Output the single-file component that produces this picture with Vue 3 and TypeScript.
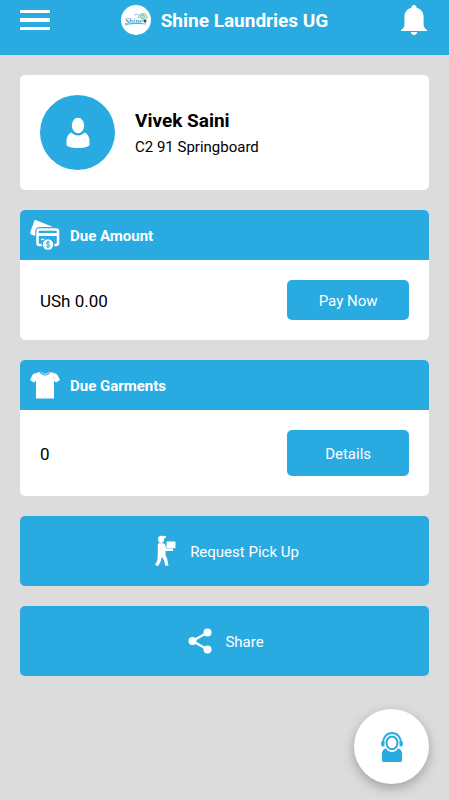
<script setup lang="ts">
interface Customer {
  name: string
  address: string
}

const customer: Customer = { name: 'Vivek Saini', address: 'C2 91 Springboard' }
const dueAmount: string = 'USh 0.00'
const dueGarments: number = 0
</script>

<template>
  <div class="page">
    <header class="topbar">
      <button class="icon-button" type="button" aria-label="Menu">
        <svg width="30" height="20" viewBox="0 0 30 20" fill="currentColor">
          <rect width="30" height="3" />
          <rect y="8" width="30" height="4" />
          <rect y="17" width="30" height="3" />
        </svg>
      </button>
      <div class="brand">
        <svg class="logo" width="30" height="30" viewBox="0 0 30 30" aria-hidden="true">
          <circle cx="15" cy="15" r="15" fill="#fff" />
          <path d="M17 13c1-5 7-6 9-2 1 3-2 4-5 3" fill="#d6efd0" stroke="#8ccf9b" stroke-width="1" />
          <circle cx="21.500" cy="11.500" r="1.800" fill="none" stroke="#5dbbb1" />
          <path d="M13 10q4-2 6 1" fill="none" stroke="#8cc8e0" stroke-width="1" />
          <text x="4" y="19" class="logo-text">Shine</text>
          <path d="M4 20Q12 17.500 25 19" fill="none" stroke="#56b5d5" stroke-width="1" />
          <circle cx="24" cy="16" r="1.500" fill="#234e65" />
        </svg>
        <h1>Shine Laundries UG</h1>
      </div>
      <button class="icon-button" type="button" aria-label="Notifications">
        <svg width="30" height="30" viewBox="0 0 30 30" fill="currentColor">
          <path d="M15 0c1.700 0 2.600 1.100 2.600 2.800C22 4 24.600 7.400 24.600 12v7.500c0 2.400 1.400 4.200 3.400 5.500v1H2v-1c2-1.300 3.400-3.100 3.400-5.500V12c0-4.600 2.600-8 7-9.200C12.400 1.100 13.300 0 15 0Z" />
          <path d="M11.800 27h6.400c-.3 1.900-1.500 3-3.200 3s-2.900-1.100-3.200-3Z" />
        </svg>
      </button>
    </header>

    <main class="content">
      <section class="card profile">
        <div class="avatar">
          <svg width="24" height="32" viewBox="0 0 24 32" fill="currentColor" aria-hidden="true">
            <ellipse cx="12" cy="8.500" rx="6.200" ry="7.700" />
            <path d="M5.500 15.500c1.700 1.900 3.900 2.900 6.500 2.900s4.800-1 6.500-2.900c3.300 1.200 5 4.300 5 8.700v3.300c0 2.100-4.500 3.500-11.500 3.500S.5 29.600.5 27.500v-3.300c0-4.400 1.700-7.500 5-8.700Z" />
          </svg>
        </div>
        <div class="identity">
          <h2>{{ customer.name }}</h2>
          <p>{{ customer.address }}</p>
        </div>
      </section>

      <section class="card">
        <div class="card-head">
          <svg width="30" height="30" viewBox="0 0 30 30" aria-hidden="true">
            <path d="M5.700 0 23 7H10C7 7 5.200 8.600 5.200 11.500V16L1.300 14.400C.3 14 0 13 .4 12L4.200 1C4.500.1 5 0 5.700 0Z" fill="#fff" />
            <rect x="7.500" y="9.500" width="20.500" height="15.500" rx="2" fill="none" stroke="#fff" stroke-width="2.500" />
            <path d="M8 14.500h20" stroke="#fff" stroke-width="3" />
            <path d="M11 19.500h5" stroke="#fff" stroke-width="1.500" />
            <circle cx="18" cy="24.500" r="6.500" fill="#29abe2" />
            <circle cx="18" cy="24.500" r="5.200" fill="#fff" />
            <path d="M20 22.700c-.8-1.300-3.700-1.200-3.700.3 0 1.900 3.700.9 3.700 2.900 0 1.600-3 1.700-4 .3M18 20.700v7.600" fill="none" stroke="#29abe2" stroke-width="1" />
          </svg>
          <h3>Due Amount</h3>
        </div>
        <div class="card-body">
          <span>{{ dueAmount }}</span>
          <button class="action" type="button">Pay Now</button>
        </div>
      </section>

      <section class="card">
        <div class="card-head">
          <svg width="30" height="30" viewBox="0 0 30 30" fill="currentColor" aria-hidden="true">
            <path d="M9.500 2c1.100 2.300 3 3.500 5.500 3.500S19.400 4.300 20.500 2l5 1.400c1 .3 1.500.8 2 1.700L30 10l-4 2.500-2-1.700V28.500H6V10.800l-2 1.700L0 10l2.500-4.900c.5-.9 1-1.400 2-1.700Z" />
            <path d="M11 1.800c.9 1.500 2.200 2.300 4 2.300s3.100-.8 4-2.300" fill="none" stroke="currentColor" stroke-width=".8" />
          </svg>
          <h3>Due Garments</h3>
        </div>
        <div class="card-body">
          <span>{{ dueGarments }}</span>
          <button class="action action-tall" type="button">Details</button>
        </div>
      </section>

      <button class="wide-action" type="button">
        <svg width="30" height="32" viewBox="0 0 30 32" fill="currentColor" aria-hidden="true">
          <path d="M8 4C8 2 9.600.8 11.500.8L16 1v1.500l-2 1.100c.5 2.600-.8 4.400-2.800 4.400S8 6.500 8 4Z" />
          <path d="M9 8.300h4c1.200 0 1.800.7 2.200 1.700l1.200 3.500H23v2.500h-7.500V20l1.700 4 1.300 6.700h-3.200L14 25.200l-2.200-3.400-1.200 5L8 31.200 5 29.800 7.300 25.500 7.800 20v-9.500c0-1.200.1-1.900 1.200-2.200Z" />
          <rect x="16.500" y="6.500" width="9" height="6.700" rx=".8" />
        </svg>
        <span>Request Pick Up</span>
      </button>

      <button class="wide-action" type="button">
        <svg width="30" height="26" viewBox="0 0 30 26" fill="currentColor" aria-hidden="true">
          <path d="M22.500 4.500 7.500 13l15 8.500" fill="none" stroke="currentColor" stroke-width="2.300" />
          <circle cx="22.500" cy="4.500" r="4" />
          <circle cx="7.500" cy="13" r="4" />
          <circle cx="22.500" cy="21.500" r="4" />
        </svg>
        <span>Share</span>
      </button>
    </main>

    <button class="support" type="button" aria-label="Customer support">
      <svg width="22" height="32" viewBox="0 0 22 32" aria-hidden="true">
        <path d="M2 13C2 6 5.800 2 11 2s9 4 9 11" fill="none" stroke="#29abe2" stroke-width="1.800" />
        <path d="M1.500 10h2v5.500H2c-1.300 0-2-.9-2-2.500 0-1.700.5-2.700 1.500-3Zm19 0h-2v5.500H20c1.300 0 2-.9 2-2.500 0-1.700-.5-2.700-1.500-3Z" fill="#29abe2" />
        <path d="M5 17.200c1.400 2.500 3.400 3.700 6 3.700s4.600-1.200 6-3.700c2.700.8 4 2.700 4 5.800v6c0 1.400-.8 2-2 2H3c-1.200 0-2-.6-2-2v-6c0-3.100 1.300-5 4-5.800Z" fill="#29abe2" />
        <ellipse cx="11" cy="11.800" rx="5.500" ry="6.400" fill="#fff" stroke="#29abe2" stroke-width="2" />
      </svg>
    </button>
  </div>
</template>

<style>
body {
  background: #dcdcdc;
}
</style>

<style scoped>
.page {
  min-height: 100vh;
  font-family: Roboto, "Liberation Sans", sans-serif;
  color: #000;
}

h1,
h2,
h3,
p {
  margin: 0;
}

button {
  border: 0;
  padding: 0;
  font-family: inherit;
  cursor: pointer;
}

svg {
  display: block;
  flex: none;
}

.topbar {
  display: flex;
  align-items: center;
  justify-content: space-between;
  height: 40px;
  padding: 0 20px 15px;
  background: #29abe2;
  color: #fff;
}

.icon-button {
  background: none;
  color: inherit;
}

.brand {
  display: flex;
  align-items: center;
  gap: 10px;
}

.logo-text {
  font: italic 8px "Liberation Serif", serif;
  fill: #16789f;
}

h1 {
  padding-top: 2px;
  font-size: 19px;
  line-height: 24px;
  font-weight: 700;
}

.content {
  display: flex;
  flex-direction: column;
  gap: 20px;
  padding: 20px;
}

.card {
  border-radius: 5px;
  background: #fff;
  overflow: hidden;
}

.profile {
  display: flex;
  align-items: center;
  gap: 20px;
  padding: 20px;
}

.avatar {
  display: flex;
  flex: none;
  align-items: center;
  justify-content: center;
  width: 75px;
  height: 75px;
  border-radius: 50%;
  background: #29abe2;
  color: #fff;
}

.identity {
  display: flex;
  flex-direction: column;
  gap: 4px;
}

h2 {
  font-size: 19px;
  line-height: 24px;
  font-weight: 700;
}

p {
  font-size: 15px;
  line-height: 20px;
}

.card-head {
  display: flex;
  align-items: center;
  gap: 10px;
  padding: 10px;
  background: #29abe2;
  color: #fff;
}

h3 {
  padding-top: 2px;
  font-size: 15px;
  line-height: 20px;
  font-weight: 700;
}

.card-body {
  display: flex;
  align-items: center;
  justify-content: space-between;
  padding: 20px;
  font-size: 17px;
  line-height: 24px;
}

.card-body span,
.wide-action span {
  padding-top: 2px;
}

.action {
  width: 33%;
  height: 40px;
  padding-top: 2px;
  border-radius: 5px;
  background: #29abe2;
  color: #fff;
  font-size: 15px;
}

.action-tall {
  height: 46px;
}

.wide-action {
  display: flex;
  align-items: center;
  justify-content: center;
  gap: 10px;
  height: 70px;
  border-radius: 5px;
  background: #29abe2;
  color: #fff;
  font-size: 15px;
}

.support {
  position: fixed;
  right: 20px;
  bottom: 16px;
  display: flex;
  align-items: center;
  justify-content: center;
  width: 75px;
  height: 75px;
  border-radius: 50%;
  background: #fff;
  box-shadow: 0 4px 12px rgb(0 0 0 / 28%);
}
</style>
